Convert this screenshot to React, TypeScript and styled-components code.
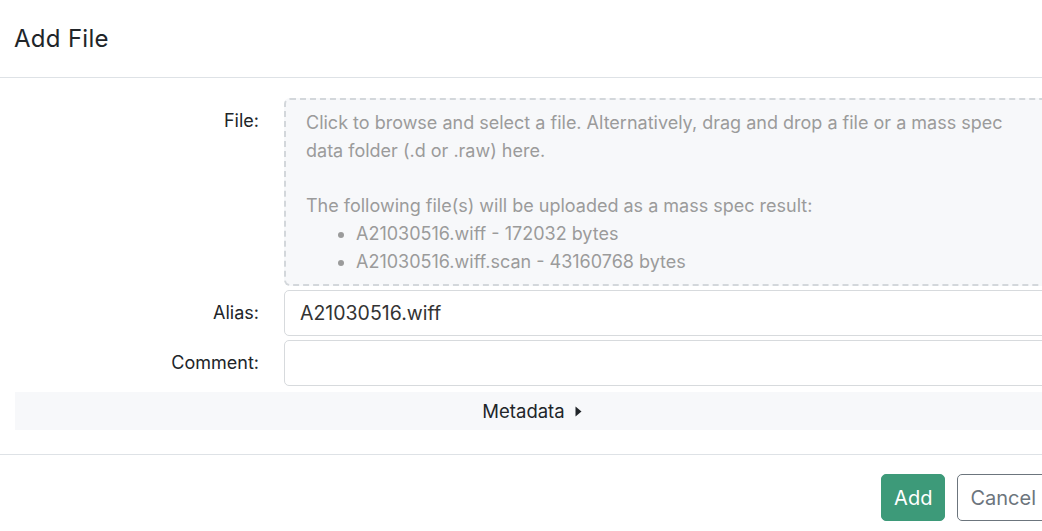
import React from 'react';
import styled, { createGlobalStyle } from 'styled-components';

const GlobalStyle = createGlobalStyle`
    html, body {
        margin: 0;
        padding: 0;
        background: #ffffff;
        overflow: hidden;
    }
    body {
        font-family: Inter, "Open Sans", "Liberation Sans", sans-serif;
        color: #212529;
    }
`;

const files = [
    { name: 'A21030516.wiff', size: 172032 },
    { name: 'A21030516.wiff.scan', size: 43160768 },
];

const App: React.FC = () => {
    return (
        <>
            <GlobalStyle />
            <Modal>
                <Header>
                    <Title>Add File</Title>
                    <Close>×</Close>
                </Header>
                <Body>
                    <Row>
                        <Label>File:</Label>
                        <DropZone>
                            <p>Click to browse and select a file. Alternatively, drag and drop a file or a mass spec data folder (.d or .raw) here.</p>
                            <p>The following file(s) will be uploaded as a mass spec result:</p>
                            <FileList>
                                {files.map(f => (
                                    <li key={f.name}>{f.name} - {f.size} bytes</li>
                                ))}
                            </FileList>
                        </DropZone>
                    </Row>
                    <Row>
                        <Label>Alias:</Label>
                        <Input defaultValue="A21030516.wiff" />
                    </Row>
                    <Row>
                        <Label>Comment:</Label>
                        <Input defaultValue="" />
                    </Row>
                    <MetaBar>
                        Metadata
                        <Caret viewBox="0 0 7 11" width="7" height="11">
                            <path d="M0.5 0.5 L6.5 5.5 L0.5 10.5 Z" fill="#212529" />
                        </Caret>
                    </MetaBar>
                </Body>
                <Footer>
                    <Btn variant="primary">Add</Btn>
                    <Btn variant="secondary">Cancel</Btn>
                </Footer>
            </Modal>
        </>
    );
};

export default App;

const Modal = styled.div`
    width: 1064px;
    background: #ffffff;
`;

const Header = styled.div`
    display: flex;
    justify-content: space-between;
    align-items: center;
    height: 77px;
    padding: 0 14px;
    border-bottom: 1px solid #dee2e6;
`;

const Title = styled.h5`
    margin: 0;
    font-size: 24px;
    font-weight: 400;
    letter-spacing: 0.3px;
    line-height: 33px;
    color: #212529;
`;

const Close = styled.button`
    all: unset;
    font-size: 24px;
    color: #666;
    opacity: 0.6;
    margin-right: -10px;
`;

const Body = styled.div`
    display: flex;
    flex-direction: column;
    gap: 4px;
    padding: 20px 15px 24px 15px;
`;

const Row = styled.div`
    display: grid;
    grid-template-columns: 244px 1fr;
    column-gap: 25px;
    align-items: start;
`;

const Label = styled.label`
    text-align: right;
    padding-top: 9px;
    font-size: 18px;
    line-height: 28px;
    color: #212529;
`;

const DropZone = styled.div`
    border: 2px dashed #d3d7db;
    border-radius: 6px;
    background: #f7f8fa;
    padding: 9px 20px 9px 20px;
    color: #9b9b9b;
    font-size: 18px;
    line-height: 27.7px;

    p {
        margin: 0 0 27.7px 0;
    }
    p:last-of-type {
        margin: 0;
    }
`;

const FileList = styled.ul`
    margin: 0;
    padding-left: 50px;
`;

const Input = styled.input`
    height: 46px;
    box-sizing: border-box;
    border: 1px solid #d7dadd;
    border-radius: 5px;
    padding: 0 15px;
    font-family: inherit;
    font-size: 19.5px;
    color: #333;
    outline: none;
`;

const MetaBar = styled.div`
    display: flex;
    justify-content: center;
    align-items: center;
    gap: 10px;
    height: 38px;
    margin-top: 2px;
    background: #f7f8fa;
    font-size: 18.5px;
    color: #212529;
`;

const Caret = styled.svg`
    display: block;
`;

const Footer = styled.div`
    display: flex;
    justify-content: flex-end;
    gap: 12px;
    padding: 19px 15px 20px 15px;
    border-top: 1px solid #dee2e6;
`;

const Btn = styled.button<{ variant: 'primary' | 'secondary' }>`
    height: 47px;
    padding: 0 12px;
    border-radius: 5px;
    font-family: inherit;
    font-size: 20px;
    cursor: pointer;
    background: ${p => (p.variant === 'primary' ? '#3d9a79' : '#ffffff')};
    color: ${p => (p.variant === 'primary' ? '#ffffff' : '#6c757d')};
    border: 1px solid ${p => (p.variant === 'primary' ? '#3d9a79' : '#6c757d')};
`;
